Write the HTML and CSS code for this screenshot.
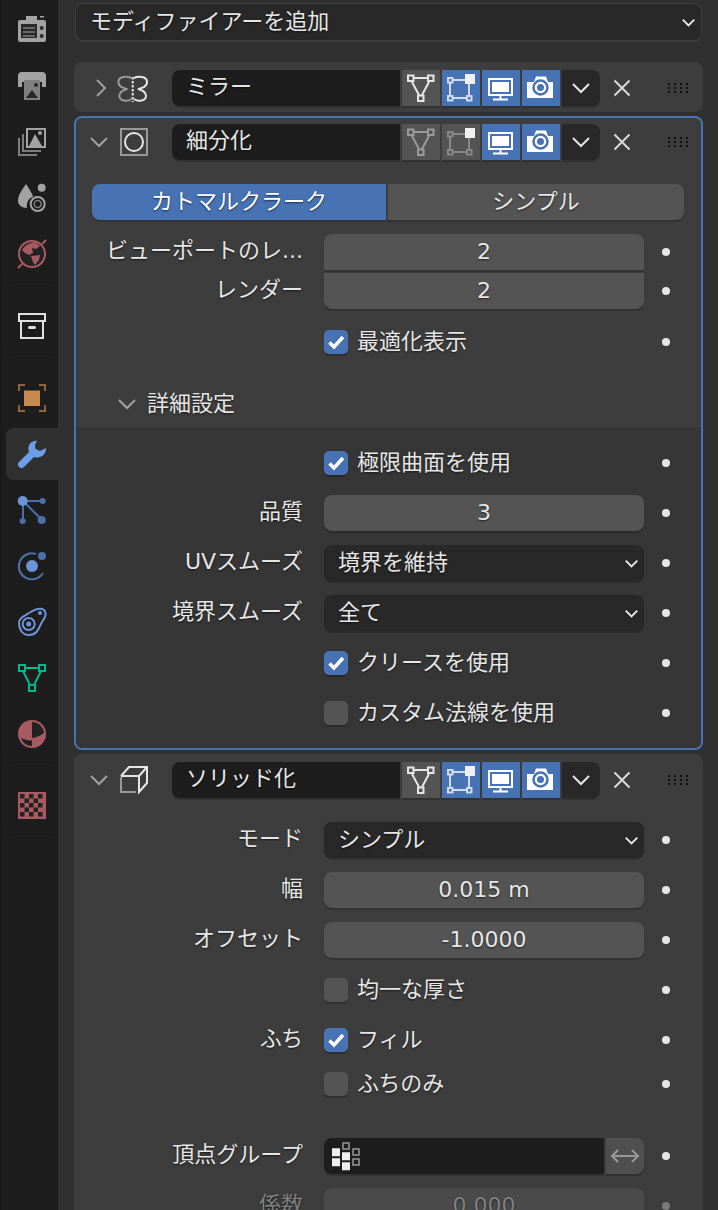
FILE: index.html
```html
<!DOCTYPE html>
<html lang="ja">
<head>
  <meta charset="UTF-8">
  <meta name="viewport" content="width=device-width, initial-scale=1.0">
  <title>モディファイアー</title>
  <link rel="stylesheet" href="styles.css">
</head>
<body>
  <!-- shared icons -->
  <svg class="defs" width="0" height="0">
    <symbol id="i-edit" viewBox="0 0 38 36">
      <path d="M12 8H25M10 12L17 25M27 12L20 25" fill="none" stroke="currentColor" stroke-width="2"/>
      <path d="M6 5.500H11.500V11H6ZM26 5.500H31.500V11H26ZM16 25.500H21.500V31H16Z" fill="none" stroke="currentColor" stroke-width="2"/>
    </symbol>
    <symbol id="i-cage" viewBox="0 0 38 36">
      <path d="M11 10H23M8 13V25M11 28H24M27 14V25" fill="none" stroke="currentColor" stroke-width="2" opacity=".75"/>
      <path d="M6 8H10.500V12.500H6ZM6 26H10.500V30.500H6ZM25 26H29.500V30.500H25Z" fill="none" stroke="currentColor" stroke-width="2" opacity=".75"/>
      <rect x="23" y="4" width="10" height="10" fill="#f0f0f0"/>
    </symbol>
    <symbol id="i-monitor" viewBox="0 0 38 36">
      <rect x="7" y="9" width="23" height="16" fill="none" stroke="#fff" stroke-width="2"/>
      <rect x="10" y="12" width="17" height="10" fill="#fff"/>
      <path d="M18.500 25V29M11 29.500H26" fill="none" stroke="#fff" stroke-width="2"/>
    </symbol>
    <symbol id="i-camera" viewBox="0 0 38 36">
      <path d="M5 12H12L14 6.500H24L26 12H31V28H5Z" fill="#fff"/>
      <circle cx="18.500" cy="17.500" r="7" fill="none" stroke="#4772b3" stroke-width="2.500"/>
      <circle cx="18.500" cy="17.500" r="3.500" fill="#4772b3"/>
    </symbol>
    <symbol id="i-chev" viewBox="0 0 18 12">
      <path d="M1 2L9 10L17 2" fill="none" stroke="currentColor" stroke-width="2" vector-effect="non-scaling-stroke"/>
    </symbol>
    <symbol id="i-x" viewBox="0 0 18 18">
      <path d="M1.500 1.500L16.500 16.500M16.500 1.500L1.500 16.500" fill="none" stroke="currentColor" stroke-width="2"/>
    </symbol>
    <symbol id="i-check" viewBox="0 0 24 24">
      <path d="M5.500 12.500L10 17L19 7" fill="none" stroke="#fff" stroke-width="3.500"/>
    </symbol>
  </svg>

  <div class="app">
    <nav class="sidebar">
      <div class="tab-group">
        <div class="tab">
          <svg class="tab-icon" viewBox="0 0 32 32">
            <path d="M2 8Q2 6 4 6H10V2H21V6H28Q30 6 30 8V26Q30 28 28 28H4Q2 28 2 26Z" fill="#a3a3a3"/>
            <rect x="24" y="2" width="4" height="1.500" fill="#a3a3a3"/>
            <rect x="5" y="10" width="16" height="14" fill="#2a2a2a"/>
            <path d="M7 14H19M7 18H19M7 22H19" stroke="#7d7d7d" stroke-width="1.500"/>
            <circle cx="25.700" cy="14" r="2" fill="#2a2a2a"/>
            <circle cx="25.700" cy="22" r="2" fill="#2a2a2a"/>
          </svg>
        </div>
        <div class="tab">
          <svg class="tab-icon" viewBox="0 0 32 32">
            <path d="M2 6Q2 2 6 2H26Q30 2 30 6V17H26V12H6V17H2Z" fill="#a3a3a3"/>
            <rect x="8" y="10" width="16" height="20" fill="#808080"/>
            <path d="M10 28L16 20L22 28Z" fill="#262626"/>
            <circle cx="20" cy="15" r="2" fill="#262626"/>
          </svg>
        </div>
        <div class="tab">
          <svg class="tab-icon" viewBox="0 0 32 32">
            <rect x="11" y="3" width="18" height="18" fill="none" stroke="#a3a3a3" stroke-width="2"/>
            <path d="M13 20L19 8L26 20Z" fill="#a3a3a3"/>
            <circle cx="24" cy="7" r="2" fill="#a3a3a3"/>
            <path d="M7 8V25H25M3 12V29H21" fill="none" stroke="#7d7d7d" stroke-width="2"/>
          </svg>
        </div>
        <div class="tab">
          <svg class="tab-icon" viewBox="0 0 32 32">
            <path d="M10 2C14 8 17 13 17 15C13 16 10 20 11 26C6 26 2 23 2 19C2 13 6 8 10 2Z" fill="#a3a3a3"/>
            <circle cx="25.700" cy="5.700" r="4" fill="#a3a3a3"/>
            <circle cx="21.700" cy="22" r="7" fill="none" stroke="#a3a3a3" stroke-width="2"/>
            <circle cx="21.700" cy="22" r="3.500" fill="none" stroke="#7d7d7d" stroke-width="1.500"/>
          </svg>
        </div>
        <div class="tab">
          <svg class="tab-icon" viewBox="0 0 32 32">
            <circle cx="16" cy="16" r="13" fill="#222" stroke="#a85a63" stroke-width="2"/>
            <path d="M6 12Q10 5 19 4L24 8L20 11L16 10L17 15L13 17L9 15ZM15 18L24 17L23 22L19 27L17 24Z" fill="#a85a63"/>
            <path d="M30 2L26 6M6 26L2 30" fill="none" stroke="#a85a63" stroke-width="2"/>
          </svg>
        </div>
      </div>
      <div class="tab-group">
        <div class="tab">
          <svg class="tab-icon" viewBox="0 0 32 32">
            <rect x="3" y="4" width="26" height="7" fill="none" stroke="#e0e0e0" stroke-width="2"/>
            <path d="M5 11V28H27V11" fill="none" stroke="#e0e0e0" stroke-width="2"/>
            <rect x="12" y="16" width="8" height="3" rx="1.500" fill="#e0e0e0"/>
          </svg>
        </div>
      </div>
      <div class="tab-group">
        <div class="tab">
          <svg class="tab-icon" viewBox="0 0 32 32">
            <rect x="8" y="8.500" width="16" height="15.500" fill="#c68a4e"/>
            <path d="M3 9V3H9M23 3H29V9M29 23V29H23M9 29H3V23" fill="none" stroke="#8f6540" stroke-width="2"/>
          </svg>
        </div>
        <div class="tab tab-active">
          <svg class="tab-icon" viewBox="0 0 32 32">
            <path d="M21 2.500C14 3 11 8 13 14L3 24C1.500 25.500 1.500 27.500 3 29C4.500 30.500 6.500 30.500 8 29L18 19C24.500 21 30 17 30 10L24 13L19.500 11L19 7Z" fill="#6d9de6"/>
          </svg>
        </div>
        <div class="tab">
          <svg class="tab-icon" viewBox="0 0 32 32">
            <path d="M7 7H26M7 7V27M7 7L26 26" fill="none" stroke="#4c6fa8" stroke-width="2"/>
            <circle cx="6.700" cy="7" r="5" fill="#6d93d8"/>
            <circle cx="26.700" cy="7" r="3" fill="#4c6fa8"/>
            <circle cx="6.700" cy="27" r="3" fill="#4c6fa8"/>
            <circle cx="25.700" cy="26" r="4" fill="#4c6fa8"/>
          </svg>
        </div>
        <div class="tab">
          <svg class="tab-icon" viewBox="0 0 32 32">
            <path d="M20 4A13 13 0 1 0 27 23" fill="none" stroke="#4c6fa8" stroke-width="2"/>
            <circle cx="16" cy="16" r="6" fill="#6d93d8"/>
            <circle cx="26" cy="6" r="4" fill="#4c6fa8"/>
          </svg>
        </div>
        <div class="tab">
          <svg class="tab-icon" viewBox="0 0 32 32">
            <path d="M3 17C3 12 8 10 13 7C18 4 24 1 28 4C31 7 29 12 26 16C23 21 22 29 13 29C6 29 3 23 3 17Z" fill="none" stroke="#6d93d8" stroke-width="2"/>
            <circle cx="12.700" cy="18" r="6" fill="none" stroke="#6d93d8" stroke-width="2"/>
            <circle cx="12.700" cy="18" r="2.500" fill="#6d93d8"/>
            <circle cx="24" cy="7" r="2" fill="#6d93d8"/>
          </svg>
        </div>
        <div class="tab">
          <svg class="tab-icon" viewBox="0 0 32 32">
            <path d="M9 6H23M7 9L14 23M25 9L18 23" fill="none" stroke="#00b68a" stroke-width="2"/>
            <path d="M3 3H9V9H3ZM23 3H29V9H23ZM13 23H19V29H13Z" fill="none" stroke="#00b68a" stroke-width="2"/>
          </svg>
        </div>
        <div class="tab">
          <svg class="tab-icon" viewBox="0 0 32 32">
            <circle cx="16" cy="16" r="14" fill="#a85a63"/>
            <path d="M16 4A12 12 0 0 1 28 15C24 18 20 19.500 16 20ZM4.800 20C8 21.500 12 22.500 16 22.500V28A12 12 0 0 1 4.800 20Z" fill="#222"/>
          </svg>
        </div>
      </div>
      <div class="tab-group">
        <div class="tab">
          <svg class="tab-icon" viewBox="0 0 32 32">
            <rect x="2" y="2" width="28" height="27" fill="#a85a63"/>
            <path d="M4 4H8.500V8.500H4ZM13 4H17.500V8.500H13ZM22 4H26.500V8.500H22ZM8.500 8.500H13V13H8.500ZM17.500 8.500H22V13H17.500ZM4 13H8.500V17.500H4ZM13 13H17.500V17.500H13ZM22 13H26.500V17.500H22ZM8.500 17.500H13V22H8.500ZM17.500 17.500H22V22H17.500ZM4 22H8.500V26.500H4ZM13 22H17.500V26.500H13ZM22 22H26.500V26.500H22Z" fill="#222"/>
          </svg>
        </div>
      </div>
    </nav>

    <main class="content">
      <div class="add-modifier">
        <span>モディファイアーを追加</span>
        <svg class="chev-small"><use href="#i-chev"/></svg>
      </div>

      <!-- mirror -->
      <section class="panel panel-closed">
        <div class="panel-head">
          <div class="fold">
            <svg class="fold-right" viewBox="0 0 12 20"><path d="M2 2L10 10L2 18" fill="none" stroke="currentColor" stroke-width="2"/></svg>
          </div>
          <svg class="mod-icon" viewBox="0 0 32 32">
            <path d="M15.400 6C11.400 4 2.400 4 2.400 10C2.400 15 7.400 16 11.400 17C7.400 18 3.400 20 3.400 24C3.400 29 11.400 30 15.400 27" fill="none" stroke="#999" stroke-width="2"/>
            <path d="M18 6C22 4 31 4 31 10C31 15 26 16 22 17C26 18 30 20 30 24C30 29 22 30 18 27" fill="none" stroke="#e6e6e6" stroke-width="2"/>
            <path d="M16.700 5V30" stroke="#e6e6e6" stroke-width="2" stroke-dasharray="2.500 1.500"/>
          </svg>
          <div class="name-field">ミラー</div>
          <div class="mode-btn"><svg><use href="#i-edit"/></svg></div>
          <div class="mode-btn on"><svg><use href="#i-cage"/></svg></div>
          <div class="mode-btn on"><svg><use href="#i-monitor"/></svg></div>
          <div class="mode-btn on"><svg><use href="#i-camera"/></svg></div>
          <div class="mode-menu"><svg><use href="#i-chev"/></svg></div>
          <svg class="close"><use href="#i-x"/></svg>
          <div class="grip"></div>
        </div>
      </section>

      <!-- subdivision -->
      <section class="panel panel-active">
        <div class="panel-head">
          <div class="fold"><svg class="fold-down"><use href="#i-chev"/></svg></div>
          <svg class="mod-icon" viewBox="0 0 32 32">
            <rect x="5" y="3" width="26" height="26" fill="none" stroke="#999" stroke-width="2"/>
            <circle cx="18" cy="16" r="9" fill="none" stroke="#e6e6e6" stroke-width="2"/>
          </svg>
          <div class="name-field">細分化</div>
          <div class="mode-btn dim"><svg><use href="#i-edit"/></svg></div>
          <div class="mode-btn dim"><svg><use href="#i-cage"/></svg></div>
          <div class="mode-btn on"><svg><use href="#i-monitor"/></svg></div>
          <div class="mode-btn on"><svg><use href="#i-camera"/></svg></div>
          <div class="mode-menu"><svg><use href="#i-chev"/></svg></div>
          <svg class="close"><use href="#i-x"/></svg>
          <div class="grip"></div>
        </div>

        <div class="switch">
          <div class="switch-item on">カトマルクラーク</div>
          <div class="switch-item">シンプル</div>
        </div>

        <div class="row gap-14">
          <div class="row-label">ビューポートのレ...</div>
          <div class="row-ctl num num-top">2</div>
          <i class="dot"></i>
        </div>
        <div class="row gap-3">
          <div class="row-label">レンダー</div>
          <div class="row-ctl num num-bottom">2</div>
          <i class="dot"></i>
        </div>
        <div class="row gap-15">
          <div class="row-label"></div>
          <div class="row-ctl check-wrap">
            <span class="check on"><svg><use href="#i-check"/></svg></span>最適化表示
          </div>
          <i class="dot"></i>
        </div>

        <div class="sub-head">
          <svg class="fold-down"><use href="#i-chev"/></svg>
          <span>詳細設定</span>
        </div>
        <div class="sub-body">
          <div class="row">
            <div class="row-label"></div>
            <div class="row-ctl check-wrap">
              <span class="check on"><svg><use href="#i-check"/></svg></span>極限曲面を使用
            </div>
            <i class="dot"></i>
          </div>
          <div class="row gap-14">
            <div class="row-label">品質</div>
            <div class="row-ctl num">3</div>
            <i class="dot"></i>
          </div>
          <div class="row gap-14">
            <div class="row-label">UVスムーズ</div>
            <div class="row-ctl select">境界を維持<svg class="chev-small"><use href="#i-chev"/></svg></div>
            <i class="dot"></i>
          </div>
          <div class="row gap-14">
            <div class="row-label">境界スムーズ</div>
            <div class="row-ctl select">全て<svg class="chev-small"><use href="#i-chev"/></svg></div>
            <i class="dot"></i>
          </div>
          <div class="row gap-14">
            <div class="row-label"></div>
            <div class="row-ctl check-wrap">
              <span class="check on"><svg><use href="#i-check"/></svg></span>クリースを使用
            </div>
            <i class="dot"></i>
          </div>
          <div class="row gap-14">
            <div class="row-label"></div>
            <div class="row-ctl check-wrap">
              <span class="check"></span>カスタム法線を使用
            </div>
            <i class="dot"></i>
          </div>
        </div>
      </section>

      <!-- solidify -->
      <section class="panel panel-last">
        <div class="panel-head">
          <div class="fold"><svg class="fold-down"><use href="#i-chev"/></svg></div>
          <svg class="mod-icon" viewBox="0 0 32 32">
            <path d="M5 13V28H20" fill="none" stroke="#999" stroke-width="2"/>
            <path d="M5 12L13 3H31V19L23 28V12H5M23 12L31 3" fill="none" stroke="#e6e6e6" stroke-width="2"/>
          </svg>
          <div class="name-field">ソリッド化</div>
          <div class="mode-btn"><svg><use href="#i-edit"/></svg></div>
          <div class="mode-btn on"><svg><use href="#i-cage"/></svg></div>
          <div class="mode-btn on"><svg><use href="#i-monitor"/></svg></div>
          <div class="mode-btn on"><svg><use href="#i-camera"/></svg></div>
          <div class="mode-menu"><svg><use href="#i-chev"/></svg></div>
          <svg class="close"><use href="#i-x"/></svg>
          <div class="grip"></div>
        </div>

        <div class="row gap-24">
          <div class="row-label">モード</div>
          <div class="row-ctl select">シンプル<svg class="chev-small"><use href="#i-chev"/></svg></div>
          <i class="dot"></i>
        </div>
        <div class="row gap-14">
          <div class="row-label">幅</div>
          <div class="row-ctl num">0.015 m</div>
          <i class="dot"></i>
        </div>
        <div class="row gap-14">
          <div class="row-label">オフセット</div>
          <div class="row-ctl num">-1.0000</div>
          <i class="dot"></i>
        </div>
        <div class="row gap-14">
          <div class="row-label"></div>
          <div class="row-ctl check-wrap"><span class="check"></span>均一な厚さ</div>
          <i class="dot"></i>
        </div>
        <div class="row gap-14">
          <div class="row-label">ふち</div>
          <div class="row-ctl check-wrap">
            <span class="check on"><svg><use href="#i-check"/></svg></span>フィル
          </div>
          <i class="dot"></i>
        </div>
        <div class="row gap-8">
          <div class="row-label"></div>
          <div class="row-ctl check-wrap"><span class="check"></span>ふちのみ</div>
          <i class="dot"></i>
        </div>
        <div class="row gap-36">
          <div class="row-label">頂点グループ</div>
          <div class="row-ctl group-field">
            <div class="group-input">
              <svg class="group-icon" viewBox="0 0 38 36">
                <path d="M8 10.300H16V18.300H8ZM8 20.300H16V28.300H8ZM18 14.300H26V22.300H18ZM18 24.300H26V32.300H18Z" fill="#eee"/>
                <path d="M19 5H25V11H19ZM29 11H35V17H29ZM29 21H35V27H29Z" fill="none" stroke="#999" stroke-width="1.500"/>
              </svg>
            </div>
            <div class="group-swap">
              <svg viewBox="0 0 30 14"><path d="M2 7H28M8 1L2 7L8 13M22 1L28 7L22 13" fill="none" stroke="#999" stroke-width="2"/></svg>
            </div>
          </div>
          <i class="dot"></i>
        </div>
        <div class="row gap-14 row-off">
          <div class="row-label">係数</div>
          <div class="row-ctl num">0.000</div>
          <i class="dot"></i>
        </div>
      </section>
    </main>
  </div>
</body>
</html>
```
FILE: styles.css
```css
html, body {
  margin: 0;
  padding: 0;
  height: 100%;
  overflow: hidden;
}

body {
  background: #303030;
  color: #e6e6e6;
  font-family: "DejaVu Sans", "Noto Sans CJK JP", sans-serif;
  font-size: 22px;
  text-shadow: 0 1px 2px rgba(0, 0, 0, 0.6);
}

.defs {
  position: absolute;
}

.app {
  display: flex;
  height: 1210px;
}

/* Left tabs */
.sidebar {
  width: 52px;
  flex: none;
  padding: 2px 0 0 6px;
  background: #1d1d1d;
  box-shadow: inset 2px 0 0 #191919;
}

.tab-group {
  margin-bottom: 15px;
  border-bottom: 1px solid #191919;
  border-radius: 0 0 8px 8px;
}

.tab {
  display: flex;
  align-items: center;
  justify-content: center;
  height: 56px;
}

.tab-active {
  height: 52px;
  margin: 2px 0;
  background: #303030;
  border-radius: 8px 0 0 8px;
}

.tab-icon {
  width: 32px;
  height: 32px;
}

/* Main column */
.content {
  flex: none;
  width: 629px;
  margin-left: 16px;
  padding-top: 3px;
}

.add-modifier {
  display: flex;
  align-items: center;
  justify-content: space-between;
  box-sizing: border-box;
  height: 39px;
  margin: 0 1px 20px;
  padding: 0 6px 6px 14px;
  background: #282828;
  border: 1px solid #3d3d3d;
  border-bottom-width: 2px;
  border-radius: 8px;
}

.chev-small {
  width: 13px;
  height: 9px;
  color: #e6e6e6;
}

.add-modifier .chev-small {
  margin-top: 6px;
}

.panel {
  box-sizing: border-box;
  margin-bottom: 4px;
  background: #3d3d3d;
  border: 2px solid transparent;
  border-radius: 8px;
}

.panel-closed {
  height: 50px;
}

.panel-active {
  height: 634px;
  border-color: #4772b3;
}

.panel-last {
  height: 480px;
  border-radius: 8px 8px 0 0;
}

.panel-head {
  display: flex;
  align-items: center;
  height: 36px;
  padding: 6px 0 0 11px;
}

.fold {
  display: flex;
  justify-content: center;
  width: 24px;
  color: #a0a0a0;
}

.fold-right {
  width: 12px;
  height: 20px;
  margin-left: 3px;
}

.fold-down {
  width: 18px;
  height: 12px;
  color: #a0a0a0;
}

.mod-icon {
  width: 32px;
  height: 32px;
  margin: 0 24px 0 5px;
}

.name-field {
  box-sizing: border-box;
  width: 228px;
  height: 36px;
  line-height: 34px;
  padding-left: 14px;
  margin-right: 2px;
  background: #1d1d1d;
  border-radius: 8px 0 0 8px;
  box-shadow: 0 2px 0 rgba(0, 0, 0, 0.18);
}

.mode-btn {
  width: 38px;
  height: 36px;
  margin-right: 2px;
  background: #545454;
  color: #e6e6e6;
  box-shadow: 0 2px 0 rgba(0, 0, 0, 0.18);
}

.mode-btn svg {
  display: block;
  width: 38px;
  height: 36px;
}

.mode-btn.on {
  background: #4772b3;
  color: #fff;
}

.mode-btn.dim {
  color: #9a9a9a;
}

.mode-menu {
  display: flex;
  align-items: center;
  justify-content: center;
  width: 38px;
  height: 36px;
  background: #282828;
  color: #e6e6e6;
  border-radius: 0 8px 8px 0;
  box-shadow: 0 2px 0 rgba(0, 0, 0, 0.18);
}

.mode-menu svg {
  width: 18px;
  height: 12px;
}

.close {
  width: 18px;
  height: 18px;
  margin-left: 13px;
  color: #d8d8d8;
}

.grip {
  width: 20px;
  height: 10px;
  margin-left: 37px;
  background-image: radial-gradient(circle at 1px 1px, #111 1px, transparent 1.300px);
  background-size: 6px 4px;
}

/* Catmull-Clark / Simple */
.switch {
  display: flex;
  gap: 2px;
  height: 36px;
  margin: 24px 17px 0 16px;
}

.switch-item {
  flex: 294;
  line-height: 35px;
  text-align: center;
  background: #545454;
  border-radius: 0 8px 8px 0;
  box-shadow: 0 2px 0 rgba(0, 0, 0, 0.18);
}

.switch-item.on {
  background: #4772b3;
  color: #fff;
  border-radius: 8px 0 0 8px;
}

.switch-item:last-child {
  flex: 296;
}

/* Property rows */
.row {
  display: flex;
  align-items: center;
  height: 36px;
}

.gap-3 { margin-top: 3px; }
.gap-8 { margin-top: 8px; }
.gap-14 { margin-top: 14px; }
.gap-15 { margin-top: 15px; }
.gap-24 { margin-top: 24px; }
.gap-36 { margin-top: 36px; }

.row-label {
  flex: none;
  width: 227px;
  height: 36px;
  line-height: 34px;
  margin-right: 21px;
  text-align: right;
  white-space: nowrap;
}

.row-ctl {
  flex: none;
  box-sizing: border-box;
  width: 320px;
  height: 36px;
  line-height: 36px;
}

.num {
  text-align: center;
  background: #545454;
  border-radius: 8px;
  box-shadow: 0 2px 0 rgba(0, 0, 0, 0.18);
}

.num-top {
  border-radius: 8px 8px 0 0;
}

.num-bottom {
  border-radius: 0 0 8px 8px;
}

.select {
  display: flex;
  align-items: center;
  justify-content: space-between;
  padding: 0 6px 0 14px;
  line-height: 34px;
  background: #282828;
  border-radius: 8px;
  box-shadow: 0 2px 0 rgba(0, 0, 0, 0.18);
}

.check-wrap {
  display: flex;
  align-items: center;
  gap: 9px;
}

.check {
  flex: none;
  width: 24px;
  height: 24px;
  background: #545454;
  border-radius: 5px;
  box-shadow: 0 2px 0 rgba(0, 0, 0, 0.22);
}

.check.on {
  background: #4772b3;
}

.check svg {
  display: block;
  width: 24px;
  height: 24px;
}

.dot {
  flex: none;
  width: 8px;
  height: 8px;
  margin-left: 18px;
  background: #e6e6e6;
  border-radius: 50%;
}

.row-off {
  color: #808080;
}

.row-off .num {
  background: #4a4a4a;
}

.row-off .dot {
  background: #7a7a7a;
}

/* Advanced sub panel */
.sub-head {
  display: flex;
  align-items: center;
  gap: 11px;
  height: 36px;
  line-height: 34px;
  margin-top: 26px;
  padding-left: 42px;
}

.sub-body {
  height: 321px;
  box-sizing: border-box;
  margin-top: 5px;
  padding-top: 18px;
  background: #363636;
  border-radius: 0 0 6px 6px;
}

/* Vertex group field */
.group-field {
  display: flex;
  gap: 2px;
}

.group-input {
  flex: 1;
  background: #1d1d1d;
  border-radius: 8px 0 0 8px;
  box-shadow: 0 2px 0 rgba(0, 0, 0, 0.18);
}

.group-icon {
  display: block;
  width: 38px;
  height: 36px;
}

.group-swap {
  display: flex;
  align-items: center;
  justify-content: center;
  width: 38px;
  background: #4f4f4f;
  border-radius: 0 8px 8px 0;
  box-shadow: 0 2px 0 rgba(0, 0, 0, 0.18);
}

.group-swap svg {
  width: 30px;
  height: 14px;
}
```
